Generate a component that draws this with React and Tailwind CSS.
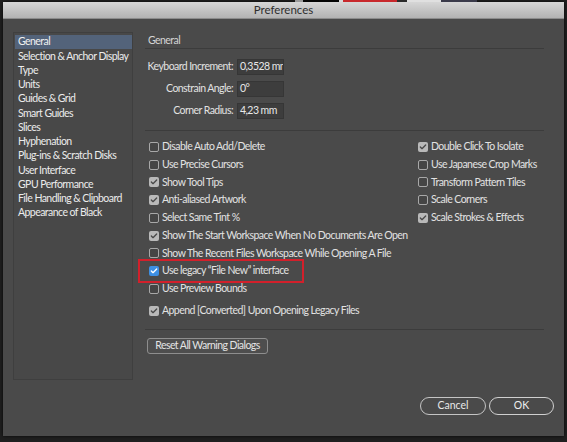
import { Check } from 'lucide-react'

const sections = [
  'General',
  'Selection & Anchor Display',
  'Type',
  'Units',
  'Guides & Grid',
  'Smart Guides',
  'Slices',
  'Hyphenation',
  'Plug-ins & Scratch Disks',
  'User Interface',
  'GPU Performance',
  'File Handling & Clipboard',
  'Appearance of Black',
]

const leftOptions = [
  { label: 'Disable Auto Add/Delete', on: false },
  { label: 'Use Precise Cursors', on: false },
  { label: 'Show Tool Tips', on: true },
  { label: 'Anti-aliased Artwork', on: true },
  { label: 'Select Same Tint %', on: false },
  { label: 'Show The Start Workspace When No Documents Are Open', on: true },
  { label: 'Show The Recent Files Workspace While Opening A File', on: false },
  { label: 'Use legacy \u201CFile New\u201D interface', on: true, blue: true, marked: true },
  { label: 'Use Preview Bounds', on: false },
]

const rightOptions = [
  { label: 'Double Click To Isolate', on: true },
  { label: 'Use Japanese Crop Marks', on: false },
  { label: 'Transform Pattern Tiles', on: false },
  { label: 'Scale Corners', on: false },
  { label: 'Scale Strokes & Effects', on: true },
]

function Box({ on, blue }) {
  if (blue) {
    return (
      <span className="shrink-0 w-[10px] h-[10px] rounded-[2px] bg-[#3d8fe3] flex items-center justify-center">
        <Check size={8} strokeWidth={4} className="text-white" />
      </span>
    )
  }
  return (
    <span
      className={
        on
          ? 'shrink-0 w-[10px] h-[10px] rounded-[2px] bg-[#b9b9b9] flex items-center justify-center'
          : 'shrink-0 w-[10px] h-[10px] rounded-[2px] border border-[#a8a8a8] bg-[#454545]'
      }
    >
      {on && <Check size={8} strokeWidth={4} className="text-[#4a4a4a]" />}
    </span>
  )
}

function Option({ label, on, blue, marked }) {
  return (
    <div className="relative h-[17.75px] flex items-center gap-[3px]">
      {marked && (
        <span className="absolute left-[-11px] top-[-3px] w-[166px] h-[24px] border-2 border-[#d2202b]" />
      )}
      <Box on={on} blue={blue} />
      <span className="whitespace-nowrap">{label}</span>
    </div>
  )
}

function Field({ label, value }) {
  return (
    <div className="flex items-center gap-[4px] h-[16px]">
      <span className="w-[88px] text-right whitespace-nowrap">{label}</span>
      <div className="w-[47px] h-[16px] bg-[#3d3d3d] border border-[#363636] overflow-hidden px-[2px] flex items-center whitespace-nowrap text-[#e8e8e8]">
        {value}
      </div>
    </div>
  )
}

export default function App() {
  return (
    <div
      className="w-[567px] h-[442px] bg-[#1f1f1f] pl-[3px] overflow-hidden text-[10.5px] tracking-[-0.55px] text-[#e2e2e2]"
      style={{ fontFamily: 'Lato, "Liberation Sans", Arial, sans-serif' }}
    >
      {/* 背景顶部的一条 */}
      <div className="h-[2px] flex">
        <div className="w-[292px]" />
        <div className="w-[8px] bg-[#9a9a9a]" />
        <div className="w-[36px] bg-[#050505]" />
        <div className="w-[4px] bg-[#d8d8d8]" />
        <div className="w-[54px] bg-[#c8282c]" />
        <div className="w-[10px] bg-[#2a2a2a]" />
        <div className="w-[34px] bg-[#e0e0e0]" />
        <div className="w-[36px] bg-[#3a3a4a]" />
      </div>

      <div className="w-[561px] h-[434px] bg-[#4a4a4a] flex flex-col shadow-[0_0_3px_rgba(0,0,0,0.8)]">
        {/* 标题栏 */}
        <div className="h-[17px] bg-gradient-to-b from-[#d6d6d6] to-[#b3b3b3] border-b border-[#8c8c8c] flex items-center justify-center text-[11.5px] tracking-normal text-[#2e2e2e]">
          Preferences
        </div>

        <div className="flex pl-[10px] pt-[13px]">
          {/* 左侧分类 */}
          <div className="w-[120px] h-[348px] border border-[#3f3f3f] bg-[#484848] pt-[2px] pl-[1px]">
            {sections.map((s, i) => (
              <div
                key={s}
                className={
                  i === 0
                    ? 'h-[14.25px] flex items-center pl-[3px] whitespace-nowrap bg-[#53637a] text-[#f0f0f0]'
                    : 'h-[14.25px] flex items-center pl-[3px] whitespace-nowrap text-[#ececec]'
                }
              >
                {s}
              </div>
            ))}
          </div>

          {/* 右侧设置 */}
          <div className="w-[399px] ml-[12px] pt-[1px]">
            <div className="h-[16px] border-b border-[#3c3c3c] pl-[3px] flex items-center text-[#d4d4d4]">
              General
            </div>

            <div className="mt-[10px] flex flex-col gap-[6px]">
              <Field label="Keyboard Increment:" value="0,3528 mm" />
              <Field label="Constrain Angle:" value="0°" />
              <Field label="Corner Radius:" value="4,23 mm" />
            </div>

            <div className="mt-[11px] border-b border-[#3c3c3c]" />

            <div className="mt-[7px] pl-[4px] flex">
              <div className="w-[269px] flex flex-col">
                {leftOptions.map(o => (
                  <Option key={o.label} {...o} />
                ))}
              </div>
              <div className="flex flex-col">
                {rightOptions.map(o => (
                  <Option key={o.label} {...o} />
                ))}
              </div>
            </div>

            <div className="mt-[4px] pl-[4px]">
              <Option label="Append [Converted] Upon Opening Legacy Files" on />
            </div>

            <div className="mt-[9px] border-b border-[#3c3c3c]" />

            <button className="mt-[8px] ml-[2px] w-[121px] h-[16px] rounded-[3px] border border-[#8e8e8e] bg-[#4e4e4e] text-[#e4e4e4] flex items-center justify-center whitespace-nowrap">
              Reset All Warning Dialogs
            </button>
          </div>
        </div>

        {/* 底部按钮 */}
        <div className="mt-[17px] flex justify-end gap-[3px] pr-[10px]">
          <button className="w-[66px] h-[18px] rounded-full border border-[#c4c4c4] text-[#e8e8e8] tracking-normal">
            Cancel
          </button>
          <button className="w-[65px] h-[18px] rounded-full border-[1.5px] border-[#d0d0d0] text-[#f0f0f0] tracking-normal">
            OK
          </button>
        </div>
      </div>
    </div>
  )
}
